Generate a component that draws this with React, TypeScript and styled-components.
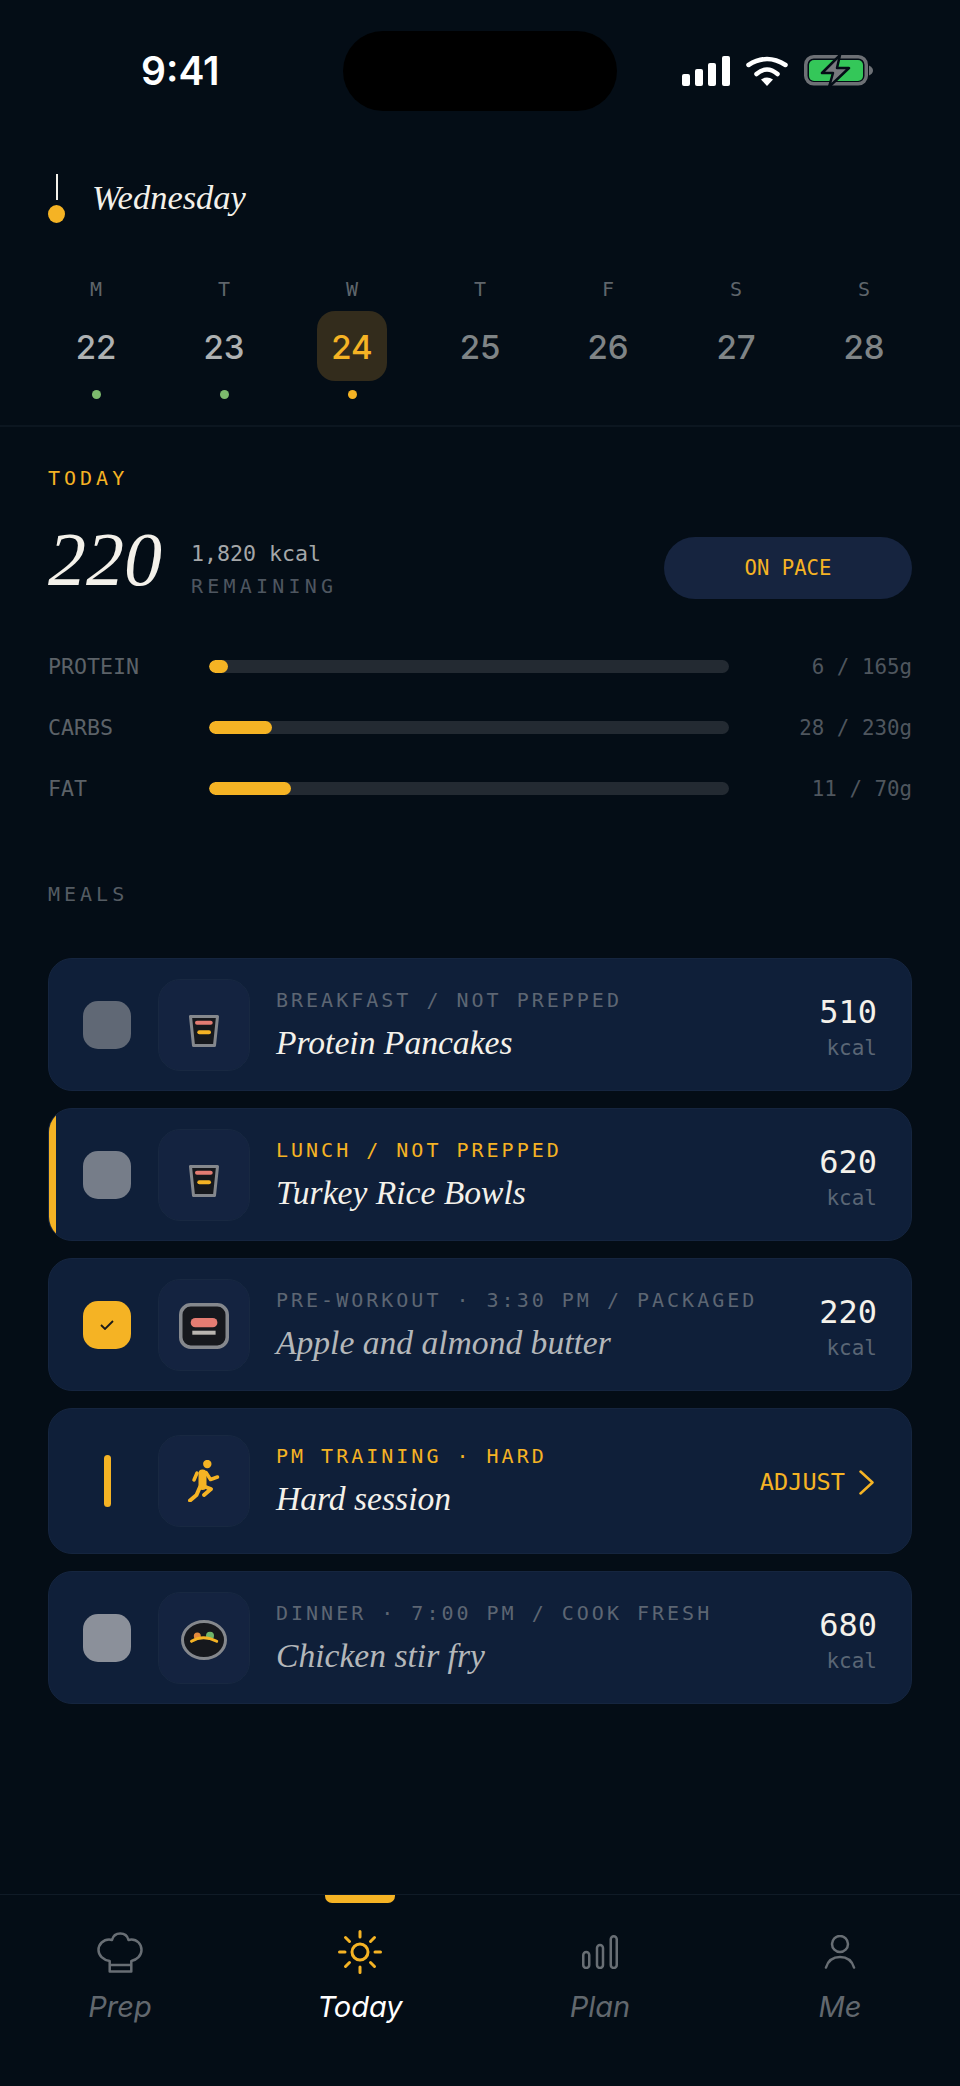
import * as React from 'react';
import styled, { createGlobalStyle } from 'styled-components';

const AMBER = '#f5b324';
const MONO = '"DejaVu Sans Mono", "Liberation Mono", monospace';
const SERIF = '"Liberation Serif", serif';
const SANS = 'Inter, "Liberation Sans", sans-serif';

const days = [
    { letter: 'M', num: 22, dot: 'green' },
    { letter: 'T', num: 23, dot: 'green' },
    { letter: 'W', num: 24, dot: 'amber', selected: true },
    { letter: 'T', num: 25 },
    { letter: 'F', num: 26 },
    { letter: 'S', num: 27 },
    { letter: 'S', num: 28 },
];

const macros = [
    { label: 'PROTEIN', value: '6 / 165g', width: 19 },
    { label: 'CARBS', value: '28 / 230g', width: 63 },
    { label: 'FAT', value: '11 / 70g', width: 82 },
];

const GlobalStyle = createGlobalStyle`
    html, body {
        margin: 0;
        padding: 0;
        background: #040d16;
    }
`;

export default function App() {
    return (
        <Page>
            <GlobalStyle />
            <StatusBar>
                <Time>9:41</Time>
                <Island />
                <StatusIcons>
                    <svg width="48" height="30" viewBox="0 0 48 30">
                        <rect x="0" y="18" width="8" height="12" rx="2" fill="#fff" />
                        <rect x="13" y="13" width="8" height="17" rx="2" fill="#fff" />
                        <rect x="26" y="7" width="8" height="23" rx="2" fill="#fff" />
                        <rect x="40" y="0" width="8" height="30" rx="2" fill="#fff" />
                    </svg>
                    <svg width="42" height="30" viewBox="0 0 42 30" fill="none">
                        <path d="M2.500 9Q21 -3 39.500 9" stroke="#fff" strokeWidth="4.500" strokeLinecap="round" />
                        <path d="M10.500 18Q21 9 31.500 18" stroke="#fff" strokeWidth="4.500" strokeLinecap="round" />
                        <path d="M15 23.500Q21 19.500 27 23.500L21 30Z" fill="#fff" />
                    </svg>
                    <svg width="69" height="32" viewBox="0 0 69 32" fill="none">
                        <rect x="1.750" y="1.750" width="60.500" height="27" rx="8" stroke="#6d7075" strokeWidth="3.500" />
                        <rect x="5" y="5" width="54" height="21" rx="5" fill="#34c759" />
                        <path d="M65 10.500C67.500 11.500 69 13.500 69 15.500C69 17.500 67.500 19.500 65 20.500Z" fill="#6d7075" />
                        <path d="M36 0L18 18H29L25 32L45 13H33L36 0Z" fill="#77797e" stroke="#040d16" strokeWidth="2.500" strokeLinejoin="round" />
                    </svg>
                </StatusIcons>
            </StatusBar>

            <DayHeader>
                <Needle>
                    <NeedleLine />
                    <NeedleDot />
                </Needle>
                <DayName>Wednesday</DayName>
            </DayHeader>

            <WeekRow>
                {days.map((d, i) => (
                    <DayCol key={i}>
                        <DayLetter>{d.letter}</DayLetter>
                        <DayNum $selected={d.selected} $past={i < 2}>{d.num}</DayNum>
                        <DayDot $color={d.dot} />
                    </DayCol>
                ))}
            </WeekRow>

            <TodaySection>
                <SectionLabel $amber>TODAY</SectionLabel>
                <SummaryRow>
                    <BigNumber>220</BigNumber>
                    <SummaryText>
                        <Kcal>1,820 kcal</Kcal>
                        <Remaining>REMAINING</Remaining>
                    </SummaryText>
                    <PacePill>ON PACE</PacePill>
                </SummaryRow>
                <MacroList>
                    {macros.map(m => (
                        <MacroRow key={m.label}>
                            <MacroLabel>{m.label}</MacroLabel>
                            <Track>
                                <Fill style={{ width: m.width }} />
                            </Track>
                            <MacroValue>{m.value}</MacroValue>
                        </MacroRow>
                    ))}
                </MacroList>
                <SectionLabel>MEALS</SectionLabel>
            </TodaySection>

            <MealList>
                <MealCard>
                    <Check $color="#606875" />
                    <Thumb><CupIcon /></Thumb>
                    <MealText>
                        <Eyebrow>BREAKFAST / NOT PREPPED</Eyebrow>
                        <MealName>Protein Pancakes</MealName>
                    </MealText>
                    <Calories><CalNum>510</CalNum><CalUnit>kcal</CalUnit></Calories>
                </MealCard>

                <MealCard $active>
                    <Check $color="#767d89" />
                    <Thumb><CupIcon /></Thumb>
                    <MealText>
                        <Eyebrow $amber>LUNCH / NOT PREPPED</Eyebrow>
                        <MealName>Turkey Rice Bowls</MealName>
                    </MealText>
                    <Calories><CalNum>620</CalNum><CalUnit>kcal</CalUnit></Calories>
                </MealCard>

                <MealCard>
                    <Check $color={AMBER}>
                        <svg width="14" height="10" viewBox="0 0 14 10" fill="none">
                            <path d="M1 5L5 9L13 1" stroke="#1a1a1a" strokeWidth="1.800" />
                        </svg>
                    </Check>
                    <Thumb><BarIcon /></Thumb>
                    <MealText>
                        <Eyebrow>PRE-WORKOUT · 3:30 PM / PACKAGED</Eyebrow>
                        <MealName $dim>Apple and almond butter</MealName>
                    </MealText>
                    <Calories><CalNum>220</CalNum><CalUnit>kcal</CalUnit></Calories>
                </MealCard>

                <MealCard $tall>
                    <TrainingMark><TrainingBar /></TrainingMark>
                    <Thumb><RunIcon /></Thumb>
                    <MealText>
                        <Eyebrow $amber>PM TRAINING · HARD</Eyebrow>
                        <MealName>Hard session</MealName>
                    </MealText>
                    <AdjustLink>
                        ADJUST
                        <svg width="15" height="25" viewBox="0 0 15 25" fill="none">
                            <path d="M1.500 1.500L13.500 12.500L1.500 23.500" stroke={AMBER} strokeWidth="2.500" strokeLinecap="round" strokeLinejoin="round" />
                        </svg>
                    </AdjustLink>
                </MealCard>

                <MealCard>
                    <Check $color="#8b909a" />
                    <Thumb><BowlIcon /></Thumb>
                    <MealText>
                        <Eyebrow>DINNER · 7:00 PM / COOK FRESH</Eyebrow>
                        <MealName $dim>Chicken stir fry</MealName>
                    </MealText>
                    <Calories><CalNum>680</CalNum><CalUnit>kcal</CalUnit></Calories>
                </MealCard>
            </MealList>

            <TabBar>
                <Tab>
                    <TabIcon>
                        <svg width="46" height="41" viewBox="0 0 46 41" fill="none" stroke="#686e74" strokeWidth="2.500">
                            <path d="M12.700 39.500V29C6 28 1.500 23.500 1.500 18C1.500 12 6.500 7.500 12 7.500C13 7.500 14 7.600 15 8C16 4 19 1.500 23.300 1.500C27.500 1.500 30.500 4 31.500 8C32.500 7.600 33.500 7.500 34.500 7.500C40 7.500 44.500 12 44.500 18C44.500 23.500 40 28 34.300 29V39.500Z" strokeLinejoin="round" />
                            <path d="M12.700 33H34.300" />
                        </svg>
                    </TabIcon>
                    <TabLabel>Prep</TabLabel>
                </Tab>
                <Tab $active>
                    <Indicator />
                    <TabIcon>
                        <svg width="44" height="44" viewBox="0 0 44 44" fill="none" stroke={AMBER} strokeWidth="3" strokeLinecap="round">
                            <circle cx="22" cy="22" r="8" />
                            <path d="M22 1.500V7M22 37V42.500M1.500 22H7M37 22H42.500M7.500 7.500L11.500 11.500M32.500 32.500L36.500 36.500M7.500 36.500L11.500 32.500M32.500 11.500L36.500 7.500" />
                        </svg>
                    </TabIcon>
                    <TabLabel $active>Today</TabLabel>
                </Tab>
                <Tab>
                    <TabIcon>
                        <svg width="36" height="34" viewBox="0 0 36 34" fill="none" stroke="#686e74" strokeWidth="2.500">
                            <rect x="1.250" y="17" width="6" height="16" rx="3" />
                            <rect x="15" y="10" width="6" height="23" rx="3" />
                            <rect x="28.750" y="1.250" width="6" height="31.750" rx="3" />
                        </svg>
                    </TabIcon>
                    <TabLabel>Plan</TabLabel>
                </Tab>
                <Tab>
                    <TabIcon>
                        <svg width="32" height="34" viewBox="0 0 32 34" fill="none" stroke="#686e74" strokeWidth="2.500" strokeLinecap="round">
                            <circle cx="16" cy="9" r="8" />
                            <path d="M2 32.500C4 26 9 22 16 22C23 22 28 26 30 32.500" />
                        </svg>
                    </TabIcon>
                    <TabLabel>Me</TabLabel>
                </Tab>
            </TabBar>
        </Page>
    );
}

function CupIcon() {
    return (
        <CupSvg width="30" height="32" viewBox="0 0 30 32">
            <path d="M1.500 1.500H28.500L25.500 30.500H4.500Z" fill="#16181d" stroke="#85888d" strokeWidth="3" strokeLinejoin="round" />
            <rect x="6" y="5.700" width="17.700" height="4" rx="2" fill="#e57c72" />
            <rect x="8.300" y="15.300" width="13.700" height="4" rx="2" fill={AMBER} />
        </CupSvg>
    );
}

function BarIcon() {
    return (
        <BarSvg width="50" height="46" viewBox="0 0 50 46">
            <rect x="1.750" y="1.750" width="46.500" height="42.500" rx="10" fill="#16181d" stroke="#85888d" strokeWidth="3.500" />
            <rect x="11.700" y="15" width="26.700" height="9.300" rx="4.650" fill="#e57c72" />
            <rect x="13.300" y="27.700" width="23.300" height="4" fill="#b9b5b0" />
        </BarSvg>
    );
}

function BowlIcon() {
    return (
        <BowlSvg width="46" height="40" viewBox="0 0 46 40">
            <ellipse cx="23" cy="20" rx="21.500" ry="18.500" fill="#16181d" stroke="#85888d" strokeWidth="3" />
            <circle cx="16.300" cy="16" r="3.500" fill="#e58a3c" />
            <circle cx="29" cy="15.700" r="4" fill="#6fb46a" />
            <path d="M10.500 21.300Q22 14 35.700 21.300" fill="none" stroke={AMBER} strokeWidth="3" strokeLinecap="round" />
        </BowlSvg>
    );
}

function RunIcon() {
    return (
        <svg width="32" height="42" viewBox="0 0 32 42" fill="none" stroke={AMBER} strokeLinecap="round" strokeLinejoin="round">
            <circle cx="19.300" cy="4" r="4.200" fill={AMBER} stroke="none" />
            <path d="M14.500 13.500L14.500 26" strokeWidth="8" />
            <path d="M9 13L6 20" strokeWidth="3.500" />
            <path d="M18 12.500L22.500 19.500L29.500 17" strokeWidth="3.500" />
            <path d="M15 26L23 29L16 35" strokeWidth="4" />
            <path d="M12 27L8.500 35L2 40.500" strokeWidth="4" />
        </svg>
    );
}

const CupSvg = styled.svg`
    margin-top: 12px;
`;

const BarSvg = styled.svg`
    margin-top: 3px;
`;

const BowlSvg = styled.svg`
    margin-top: 4px;
`;

const Page = styled.div`
    width: 960px;
    height: 2086px;
    background: #040d16;
    display: flex;
    flex-direction: column;
    overflow: hidden;
`;

const StatusBar = styled.div`
    height: 141px;
    padding: 31px 48px 0 141px;
    box-sizing: border-box;
    display: flex;
    align-items: flex-start;
`;

const Time = styled.div`
    width: 202px;
    margin-top: 16px;
    font: 600 39px/48px ${SANS};
    color: #fff;
`;

const Island = styled.div`
    width: 274px;
    height: 80px;
    border-radius: 40px;
    background: #000;
`;

const StatusIcons = styled.div`
    margin-left: 65px;
    margin-top: 24px;
    display: flex;
    align-items: center;
    gap: 16px;
`;

const DayHeader = styled.div`
    height: 50px;
    padding-left: 48px;
    margin-top: 32px;
    display: flex;
    align-items: center;
    gap: 27px;
`;

const Needle = styled.div`
    width: 17px;
    display: flex;
    flex-direction: column;
    align-items: center;
    gap: 5px;
`;

const NeedleLine = styled.div`
    width: 2px;
    height: 26px;
    background: #f4f1ea;
`;

const NeedleDot = styled.div`
    width: 17px;
    height: 18px;
    border-radius: 50%;
    background: ${AMBER};
`;

const DayName = styled.div`
    padding-bottom: 2px;
    font: italic 400 34.500px/46px ${SERIF};
    color: #f4f1ea;
`;

const WeekRow = styled.div`
    margin-top: 54px;
    padding: 0 32px 26px;
    display: grid;
    grid-template-columns: repeat(7, 128px);
    border-bottom: 2px solid #0c1620;
`;

const DayCol = styled.div`
    display: flex;
    flex-direction: column;
    align-items: center;
`;

const DayLetter = styled.div`
    font: 400 20px/24px ${MONO};
    color: #5f656b;
`;

const DayNum = styled.div<{ $selected?: boolean; $past?: boolean }>`
    margin-top: 10px;
    width: 70px;
    height: 70px;
    box-sizing: border-box;
    padding-top: 2px;
    border-radius: 18px;
    display: flex;
    align-items: center;
    justify-content: center;
    font: 500 33px/1 ${SANS};
    color: ${p => (p.$selected ? AMBER : p.$past ? '#aeb1b2' : '#7f8486')};
    background: ${p => (p.$selected ? '#332c1c' : 'transparent')};
`;

const DayDot = styled.div<{ $color?: string }>`
    margin-top: 9px;
    width: 9px;
    height: 9px;
    border-radius: 50%;
    background: ${p => (p.$color === 'green' ? '#7dba6d' : p.$color === 'amber' ? AMBER : 'transparent')};
`;

const TodaySection = styled.div`
    padding: 39px 48px 0;
`;

const SectionLabel = styled.div<{ $amber?: boolean }>`
    font: 400 20px/24px ${MONO};
    letter-spacing: 4px;
    color: ${p => (p.$amber ? AMBER : '#555c63')};
`;

const SummaryRow = styled.div`
    margin-top: 40px;
    height: 78px;
    display: flex;
    align-items: center;
`;

const BigNumber = styled.div`
    width: 143px;
    padding-bottom: 20px;
    font: italic 400 76px/78px ${SERIF};
    color: #f4f1ea;
`;

const SummaryText = styled.div`
    flex: 1;
    display: flex;
    flex-direction: column;
    gap: 7px;
    padding-top: 1px;
`;

const Kcal = styled.div`
    font: 400 21.600px/26px ${MONO};
    color: #a4a7a9;
`;

const Remaining = styled.div`
    font: 400 20px/24px ${MONO};
    letter-spacing: 4.200px;
    color: #4e5660;
`;

const PacePill = styled.div`
    width: 248px;
    height: 62px;
    margin-bottom: 2px;
    border-radius: 31px;
    background: #16243f;
    display: flex;
    align-items: center;
    justify-content: center;
    font: 400 20.600px/1 ${MONO};
    color: ${AMBER};
`;

const MacroList = styled.div`
    margin-top: 45px;
    margin-bottom: 81px;
    display: flex;
    flex-direction: column;
    gap: 35px;
`;

const MacroRow = styled.div`
    height: 26px;
    display: grid;
    grid-template-columns: 161px 520px 1fr;
    grid-template-rows: 26px;
    align-items: center;
`;

const MacroLabel = styled.div`
    padding-top: 2px;
    font: 400 21.600px/26px ${MONO};
    color: #5c6268;
`;

const Track = styled.div`
    height: 13px;
    border-radius: 7px;
    background: #232a32;
    overflow: hidden;
`;

const Fill = styled.div`
    height: 100%;
    border-radius: 7px;
    background: ${AMBER};
`;

const MacroValue = styled.div`
    padding-top: 2px;
    text-align: right;
    font: 400 20.800px/26px ${MONO};
    color: #4f565e;
`;

const MealList = styled.div`
    margin-top: 52px;
    padding: 0 48px;
    display: flex;
    flex-direction: column;
    gap: 17px;
`;

const MealCard = styled.div<{ $active?: boolean; $tall?: boolean }>`
    position: relative;
    overflow: hidden;
    box-sizing: border-box;
    height: ${p => (p.$tall ? 146 : 133)}px;
    padding: 0 34px;
    border-radius: 24px;
    border: 1px solid #15253f;
    background: #0f1f39;
    display: flex;
    align-items: center;

    ${p => p.$active && `
        &::before {
            content: "";
            position: absolute;
            left: 0;
            top: 0;
            bottom: 0;
            width: 7px;
            background: ${AMBER};
        }
    `}
`;

const Check = styled.div<{ $color: string }>`
    width: 48px;
    height: 48px;
    border-radius: 15px;
    background: ${p => p.$color};
    display: flex;
    align-items: center;
    justify-content: center;
    flex-shrink: 0;
`;

const TrainingMark = styled.div`
    width: 48px;
    display: flex;
    justify-content: center;
    flex-shrink: 0;
`;

const TrainingBar = styled.div`
    width: 7px;
    height: 52px;
    border-radius: 4px;
    background: ${AMBER};
`;

const Thumb = styled.div`
    margin-left: 27px;
    width: 92px;
    height: 92px;
    box-sizing: border-box;
    border-radius: 22px;
    border: 1px solid #182841;
    background: #142340;
    display: flex;
    align-items: center;
    justify-content: center;
    flex-shrink: 0;
`;

const MealText = styled.div`
    margin-left: 26px;
    padding-top: 1px;
    flex: 1;
    display: flex;
    flex-direction: column;
    gap: 11px;
`;

const Eyebrow = styled.div<{ $amber?: boolean }>`
    font: 400 20px/24px ${MONO};
    letter-spacing: 3px;
    color: ${p => (p.$amber ? AMBER : '#5d6673')};
`;

const MealName = styled.div<{ $dim?: boolean }>`
    font: italic 400 33.600px/40px ${SERIF};
    color: ${p => (p.$dim ? '#b4b7ba' : '#f4f1ea')};
`;

const Calories = styled.div`
    padding-top: 4px;
    display: flex;
    flex-direction: column;
    align-items: flex-end;
    gap: 6px;
`;

const CalNum = styled.div`
    font: 400 32px/36px ${MONO};
    color: #f4f1ea;
`;

const CalUnit = styled.div`
    font: 400 21px/24px ${MONO};
    color: #5a6675;
`;

const AdjustLink = styled.div`
    display: flex;
    align-items: center;
    gap: 14px;
    margin-right: 3px;
    padding-top: 3px;
    font: 400 23.600px/1 ${MONO};
    color: ${AMBER};
`;

const TabBar = styled.div`
    position: absolute;
    top: 1894px;
    left: 0;
    width: 960px;
    border-top: 1px solid #101b27;
    display: grid;
    grid-template-columns: repeat(4, 240px);
`;

const Tab = styled.div<{ $active?: boolean }>`
    position: relative;
    height: 140px;
    display: flex;
    flex-direction: column;
    align-items: center;
`;

const Indicator = styled.div`
    position: absolute;
    top: 0;
    width: 70px;
    height: 8px;
    border-radius: 0 0 7px 7px;
    background: ${AMBER};
`;

const TabIcon = styled.div`
    height: 46px;
    margin-top: 34px;
    display: flex;
    align-items: center;
    justify-content: center;
`;

const TabLabel = styled.div<{ $active?: boolean }>`
    margin-top: 12px;
    font: italic 400 29px/40px ${SANS};
    color: ${p => (p.$active ? '#fff' : '#62686e')};
`;
